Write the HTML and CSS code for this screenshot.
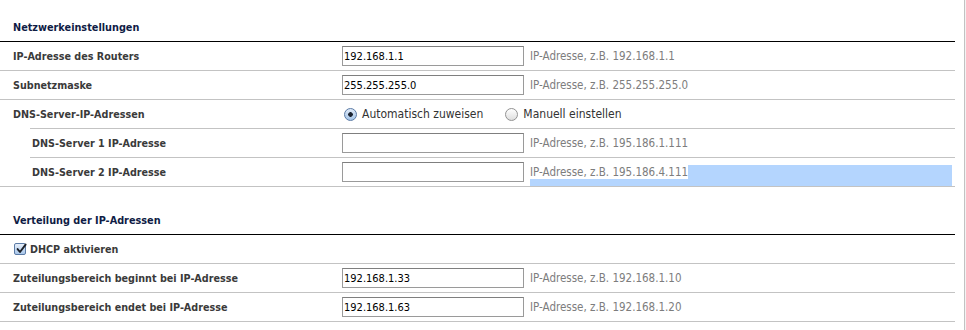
FILE: index.html
```html
<!DOCTYPE html>
<html lang="de">
<head>
  <meta charset="UTF-8" />
  <title>Netzwerkeinstellungen</title>
  <link rel="stylesheet" href="styles.css">
</head>
<body>
  <div class="frame">
    <div class="panel">
      <h2 class="section-title">Netzwerkeinstellungen</h2>

      <div class="row">
        <label class="label">IP-Adresse des Routers</label>
        <input class="field" type="text" value="192.168.1.1">
        <span class="hint">IP-Adresse, z.B. 192.168.1.1</span>
      </div>
      <div class="row">
        <label class="label">Subnetzmaske</label>
        <input class="field" type="text" value="255.255.255.0">
        <span class="hint">IP-Adresse, z.B. 255.255.255.0</span>
      </div>
      <div class="row row-parent">
        <span class="label">DNS-Server-IP-Adressen</span>
        <div class="choices">
          <label class="choice"><input type="radio" name="dns" checked> Automatisch zuweisen</label>
          <label class="choice"><input type="radio" name="dns"> Manuell einstellen</label>
        </div>
      </div>
      <div class="subgroup">
        <div class="row sub">
          <label class="label">DNS-Server 1 IP-Adresse</label>
          <input class="field" type="text" value="">
          <span class="hint">IP-Adresse, z.B. 195.186.1.111</span>
        </div>
        <div class="row sub">
          <label class="label">DNS-Server 2 IP-Adresse</label>
          <input class="field" type="text" value="">
          <div class="hint hint-selected">
            <div class="sel-line"><span>IP-Adresse, z.B. 195.186.4.111</span><span class="sel-fill"></span></div>
            <div class="sel-tail"></div>
          </div>
        </div>
      </div>

      <h2 class="section-title second">Verteilung der IP-Adressen</h2>

      <div class="row">
        <label class="label check-label">
          <span class="check">
            <svg width="12" height="12" viewBox="0 0 12 12"><path d="M2.6 6.1 L5 9 L10.6 1.6" fill="none" stroke="#1b1f26" stroke-width="1.9" stroke-linecap="round" stroke-linejoin="round"/></svg>
          </span>
          DHCP aktivieren
        </label>
      </div>
      <div class="row">
        <label class="label">Zuteilungsbereich beginnt bei IP-Adresse</label>
        <input class="field" type="text" value="192.168.1.33">
        <span class="hint">IP-Adresse, z.B. 192.168.1.10</span>
      </div>
      <div class="row">
        <label class="label">Zuteilungsbereich endet bei IP-Adresse</label>
        <input class="field" type="text" value="192.168.1.63">
        <span class="hint">IP-Adresse, z.B. 192.168.1.20</span>
      </div>
    </div>
  </div>
</body>
</html>
```

FILE: styles.css
```css
html {
  background-color: #f3f3f3;
}
body {
  font-family: "DejaVu Sans Condensed", "DejaVu Sans", sans-serif;
  color: #333333;
  margin: 0;
  padding: 0;
}
.frame {
  width: 964px;
  min-height: 330px;
  background-color: #ffffff;
  border-right: 1px solid #c2c2c2;
}
.panel {
  width: 955px;
}
.section-title {
  margin: 0;
  padding: 21px 13px 6px;
  font-size: 10.8px;
  line-height: 14px;
  font-weight: bold;
  color: #0f1c45;
  border-bottom: 1px solid #000000;
}
.section-title.second {
  margin-top: 6px;
}
.row {
  display: grid;
  grid-template-columns: 342px 188px 1fr;
  align-items: center;
  height: 28px;
  border-bottom: 1px solid #c3c3c3;
}
.row-parent {
  border-bottom: none;
}
.subgroup {
  border-bottom: 1px solid #c3c3c3;
}
.sub {
  margin-left: 30px;
  grid-template-columns: 312px 188px 1fr;
  border-bottom: none;
  border-top: 1px solid #c3c3c3;
}
.label {
  padding-left: 13px;
  font-size: 10.7px;
  font-weight: bold;
  color: #3a3a3a;
}
.sub .label {
  padding-left: 2px;
}
.field {
  box-sizing: border-box;
  width: 182px;
  height: 20px;
  margin: 0;
  padding: 0 1px;
  border: 1px solid #9a9a9a;
  border-top-color: #7f7f7f;
  font-family: "DejaVu Sans Condensed", "DejaVu Sans", sans-serif;
  font-size: 11px;
  color: #000000;
  outline: none;
}
.hint {
  font-size: 11.5px;
  color: #7d7d7d;
}
.hint-selected {
  align-self: stretch;
  display: flex;
  flex-direction: column;
  padding: 7px 3px 0 0;
}
.sel-line {
  display: flex;
  height: 14px;
  line-height: 14px;
}
.sel-fill {
  flex: 1;
  background-color: #b4d5fe;
}
.sel-tail {
  height: 7px;
  background-color: #b4d5fe;
}
.choices {
  grid-column: 2 / 4;
  display: flex;
  align-items: center;
  padding-left: 2px;
}
.choice {
  display: flex;
  align-items: center;
  gap: 5px;
  font-size: 12px;
  color: #333333;
}
.choice + .choice {
  margin-left: 22px;
}
.choice input {
  appearance: none;
  -webkit-appearance: none;
  width: 13px;
  height: 13px;
  margin: 0;
  border-radius: 50%;
  border: 1px solid #929292;
  background: linear-gradient(#ffffff, #dedede);
}
.choice input:checked {
  border-color: #5b7ba6;
  background: radial-gradient(circle, #1c2533 0, #1c2533 2px, transparent 2.6px), linear-gradient(#dfeaf8, #a4c4e8);
}
.check-label {
  display: flex;
  align-items: center;
  gap: 4px;
}
.check {
  display: block;
  width: 10px;
  height: 10px;
  margin-left: 1px;
  position: relative;
  border: 1px solid #5b7ba6;
  border-radius: 2px;
  background: linear-gradient(#e6eef9, #a9c7ea);
}
.check svg {
  position: absolute;
  left: 0;
  top: -1px;
}
```
